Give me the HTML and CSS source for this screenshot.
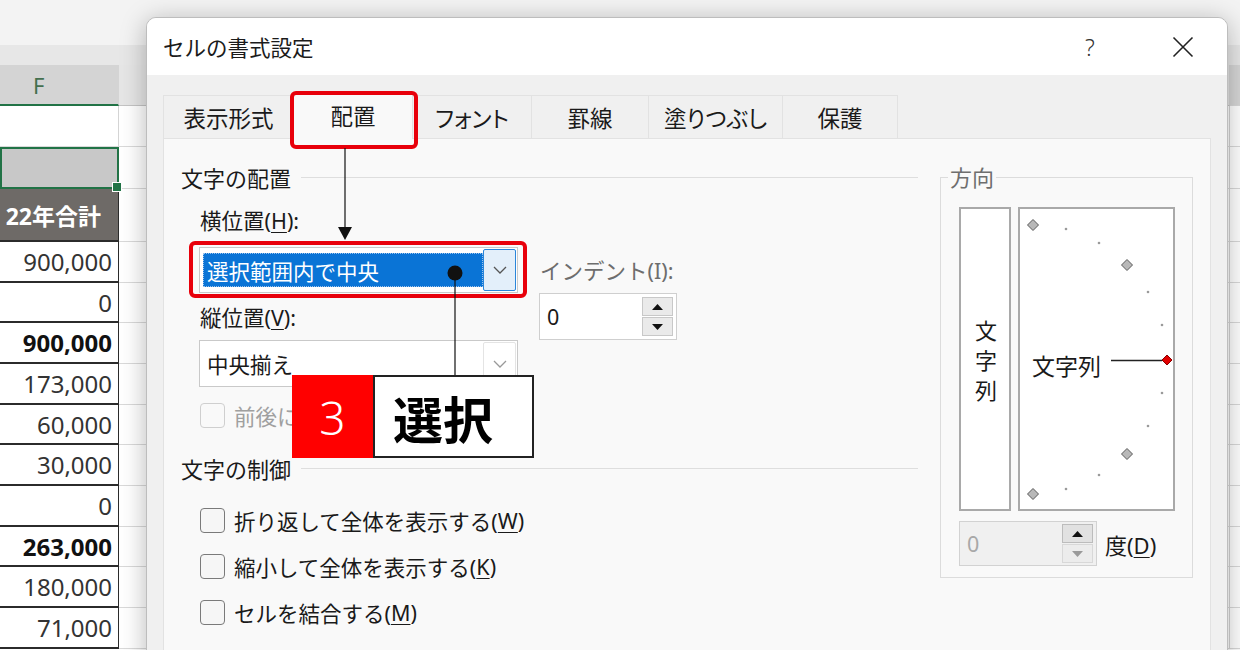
FILE: index.html
```html
<!DOCTYPE html>
<html lang="ja">
<head>
<meta charset="utf-8">
<title>セルの書式設定</title>
<link rel="stylesheet" href="styles.css">
</head>
<body>
<div class="sheet">
  <div class="ribbon"></div>
  <div class="bar"></div>
  <div class="row r-head"><div class="cf">F</div><div class="cg"></div><div class="ch"></div></div>
  <div class="row"><div class="cf"></div><div class="cg"></div><div class="ch"></div></div>
  <div class="row h42"><div class="cf sel"></div><div class="cg"></div><div class="ch"></div></div>
  <div class="row h53"><div class="cf dark">22年合計</div><div class="cg"></div><div class="ch"></div></div>
  <div class="row"><div class="cf t">900,000</div><div class="cg"></div><div class="ch"></div></div>
  <div class="row h40"><div class="cf t">0</div><div class="cg"></div><div class="ch"></div></div>
  <div class="row"><div class="cf t b">900,000</div><div class="cg"></div><div class="ch"></div></div>
  <div class="row"><div class="cf t">173,000</div><div class="cg"></div><div class="ch"></div></div>
  <div class="row h40"><div class="cf t">60,000</div><div class="cg"></div><div class="ch"></div></div>
  <div class="row"><div class="cf t">30,000</div><div class="cg"></div><div class="ch"></div></div>
  <div class="row"><div class="cf t">0</div><div class="cg"></div><div class="ch"></div></div>
  <div class="row h40"><div class="cf t b">263,000</div><div class="cg"></div><div class="ch"></div></div>
  <div class="row"><div class="cf t">180,000</div><div class="cg"></div><div class="ch"></div></div>
  <div class="row"><div class="cf t">71,000</div><div class="cg"></div><div class="ch"></div></div>
</div>

<div class="dialog">
  <div class="titlebar">
    <div class="title">セルの書式設定</div>
    <div class="tb-btn help">?</div>
    <div class="tb-btn close">
      <svg width="22" height="22" viewBox="0 0 22 22"><path d="M1.5 1.5L20.5 20.5M20.5 1.5L1.5 20.5" stroke="#222" stroke-width="1.6" fill="none"/></svg>
    </div>
  </div>
  <div class="dbody">
    <div class="tabs">
      <div class="tab w1">表示形式</div>
      <div class="tab w2 on">配置</div>
      <div class="tab w3">フォント</div>
      <div class="tab w4">罫線</div>
      <div class="tab w5">塗りつぶし</div>
      <div class="tab w6">保護</div>
    </div>
    <div class="panel">
      <div class="left">
        <div class="legend">文字の配置</div>
        <div class="halign">
          <div class="col1">
            <div class="lbl h">横位置(<u>H</u>):</div>
            <div class="combo hc">
              <div class="sel">選択範囲内で中央</div>
              <div class="dd on">
                <svg width="14" height="8" viewBox="0 0 14 8"><path d="M1 1l6 6 6-6" fill="none" stroke="#555" stroke-width="1.3"/></svg>
              </div>
            </div>
            <div class="lbl v">縦位置(<u>V</u>):</div>
            <div class="combo vc">
              <div class="val">中央揃え</div>
              <div class="dd">
                <svg width="14" height="8" viewBox="0 0 14 8"><path d="M1 1l6 6 6-6" fill="none" stroke="#999" stroke-width="1.3"/></svg>
              </div>
            </div>
          </div>
          <div class="col2">
            <div class="lbl gray">インデント(I):</div>
            <div class="spin ind">
              <div class="sval">0</div>
              <div class="btns">
                <div class="sbtn"><svg width="11" height="6" viewBox="0 0 11 6"><path d="M0 6L5.5 0L11 6Z" fill="#111"/></svg></div>
                <div class="sbtn"><svg width="11" height="6" viewBox="0 0 11 6"><path d="M0 0L5.5 6L11 0Z" fill="#111"/></svg></div>
              </div>
            </div>
          </div>
        </div>
        <div class="chk-row dis first"><span class="box"></span>前後にスペースを入れる(E)</div>
        <div class="legend second">文字の制御</div>
        <div class="checks">
          <div class="chk-row"><span class="box"></span>折り返して全体を表示する(<u>W</u>)</div>
          <div class="chk-row"><span class="box"></span>縮小して全体を表示する(<u>K</u>)</div>
          <div class="chk-row"><span class="box"></span>セルを結合する(<u>M</u>)</div>
        </div>
      </div>
      <div class="group">
        <div class="gtitle"><span>方向</span></div>
        <div class="boxes">
          <div class="vbox"><span class="vtext">文字列</span></div>
          <div class="dial">
            <svg class="dial-art" width="153" height="300" viewBox="0 0 153 300">
              <g fill="#9a9a9a">
                <circle cx="46" cy="20" r="1.3"/>
                <circle cx="79" cy="34" r="1.3"/>
                <circle cx="128" cy="83" r="1.3"/>
                <circle cx="142" cy="116" r="1.3"/>
                <circle cx="142" cy="184" r="1.3"/>
                <circle cx="128" cy="217" r="1.3"/>
                <circle cx="79" cy="266" r="1.3"/>
                <circle cx="46" cy="280" r="1.3"/>
              </g>
              <g fill="#b8b8b8" stroke="#5a5a5a" stroke-width="1">
                <path d="M13 10.5L18.5 16L13 21.5L7.5 16Z"/>
                <path d="M107 50.5L112.5 56L107 61.5L101.5 56Z"/>
                <path d="M107 239.5L112.5 245L107 250.5L101.5 245Z"/>
                <path d="M13 279.5L18.5 285L13 290.5L7.5 285Z"/>
              </g>
              <path d="M91 151.5H142" stroke="#222" stroke-width="1.4"/>
              <path d="M147 146L152 151L147 156L142 151Z" fill="#e00000" stroke="#8a0000" stroke-width="1"/>
            </svg>
            <span class="dtext">文字列</span>
          </div>
        </div>
        <div class="deg-row">
          <div class="spin deg">
            <div class="sval">0</div>
            <div class="btns">
              <div class="sbtn up"><svg width="11" height="6" viewBox="0 0 11 6"><path d="M0 6L5.5 0L11 6Z" fill="#111"/></svg></div>
              <div class="sbtn dn"><svg width="11" height="6" viewBox="0 0 11 6"><path d="M0 0L5.5 6L11 0Z" fill="#9a9a9a"/></svg></div>
            </div>
          </div>
          <div class="deg-lbl">度(<u>D</u>)</div>
        </div>
      </div>
    </div>
  </div>
</div>

<div class="mark mtab"></div>
<div class="mark mcombo"></div>
<svg class="arrow" width="14" height="93" viewBox="0 0 14 93"><path d="M7 0V80" stroke="#111" stroke-width="1.2"/><path d="M0 79H14L7 92Z" fill="#111"/></svg>
<svg class="pin" width="16" height="112" viewBox="0 0 16 112"><path d="M8 8V112" stroke="#111" stroke-width="1.2"/><circle cx="8" cy="8" r="7.5" fill="#111"/></svg>
<div class="callout"><div class="num">3</div><div class="txt">選択</div></div>
</body>
</html>
```
FILE: styles.css
```css
* { box-sizing: border-box; margin: 0; padding: 0; }
html, body { width: 1240px; height: 650px; overflow: hidden; }
body {
  position: relative;
  background: #fff;
  font-family: "Noto Sans", "Noto Sans CJK JP", sans-serif;
  color: #1a1a1a;
}
u { text-decoration: underline; text-underline-offset: 3px; text-decoration-thickness: 1px; }

/* spreadsheet behind the dialog */
.sheet { width: 1240px; }
.ribbon { height: 45px; background: #f3f3f3; }
.bar { height: 20px; background: #e7e7e7; }
.row { display: flex; height: 41px; }
.row.h40 { height: 40px; }
.row.h42 { height: 42px; }
.row.h53 { height: 53px; }
.cf {
  width: 119px; flex: none;
  border-right: 1px solid #d4d4d4; border-bottom: 1px solid #d9d9d9;
  display: flex; align-items: center; justify-content: flex-end;
  padding-right: 6px; font-size: 24px; color: #333; white-space: nowrap;
}
.cg { flex: 1; border-right: 1px solid #d4d4d4; border-bottom: 1px solid #d9d9d9; }
.ch { width: 10px; flex: none; border-bottom: 1px solid #d9d9d9; }
.r-head .cf {
  background: #d4d4d4; border-bottom: 2px solid #217346;
  justify-content: flex-start; padding-left: 33px; font-size: 22px; color: #44704f;
}
.r-head .cg { background: #e6e6e6; border-bottom-color: #c4c4c4; }
.r-head .ch { background: #d6d6d6; }
.cf.sel { background: #c8c8c8; border: 2px solid #217346; position: relative; }
.cf.sel::after {
  content: ""; position: absolute; right: -5px; bottom: -5px;
  width: 8px; height: 8px; background: #217346; border: 1px solid #fff;
}
.cf.dark {
  background: #6e6a67; color: #fff; font-weight: 700; font-size: 23px;
  padding-right: 17px; border-bottom: 2px solid #2b2b2b; border-right: 1px solid #2b2b2b;
}
.cf.t { border-bottom: 2px solid #2b2b2b; border-right: 1px solid #2b2b2b; }
.cf.b { font-weight: 700; color: #111; }

/* dialog window */
.dialog {
  position: absolute; left: 146px; top: 17px; width: 1082px; height: 680px;
  background: #f0f0f0; border: 1px solid #bdbdbd; border-radius: 10px 10px 0 0;
  box-shadow: 0 4px 26px rgba(0, 0, 0, 0.28);
  overflow: hidden; display: flex; flex-direction: column;
}
.titlebar {
  height: 57px; flex: none; background: #fff;
  display: flex; align-items: center; padding: 0 21px 0 16px;
}
.title { flex: 1; font-size: 21.5px; color: #1b1b1b; }
.tb-btn { width: 46px; height: 40px; display: flex; align-items: center; justify-content: center; }
.help { font-size: 23px; color: #333; margin-right: 47px; font-weight: 300; }

.dbody { flex: 1; padding: 17px 16px 0; display: flex; flex-direction: column; }
.tabs { display: flex; align-items: flex-end; height: 46px; flex: none; font-feature-settings: "palt"; }
.tab {
  height: 43px; display: flex; align-items: center; justify-content: center;
  font-size: 22.5px; background: #f0f0f0; color: #1a1a1a;
  border: 1px solid #e2e2e2; border-bottom: none; margin-right: -1px;
}
.tab.on { height: 47px; background: #f9f9f9; margin-bottom: -1px; position: relative; z-index: 1; padding-bottom: 2px; }
.w1 { width: 131px; }
.w2 { width: 120px; }
.w3 { width: 120px; }
.w4 { width: 118px; }
.w5 { width: 135px; }
.w6 { width: 116px; }

.panel {
  flex: 1; background: #f9f9f9; border: 1px solid #e2e2e2;
  padding: 24px 17px 0 17px;
  display: grid; grid-template-columns: 737px 253px; column-gap: 22px; align-items: start;
}

.legend { display: flex; align-items: center; height: 28px; font-size: 22px; color: #1a1a1a; }
.legend::after { content: ""; flex: 1; height: 1px; background: #dedede; margin-left: 10px; }
.legend.second { margin-top: 24px; }

.halign { display: flex; align-items: flex-start; padding-left: 18px; }
.col1 { width: 319px; }
.col2 { width: 138px; margin-left: 21px; padding-top: 65px; }
.lbl { height: 30px; line-height: 30px; font-size: 21.5px; padding-left: 1px; white-space: nowrap; }
.lbl.h { margin-top: 15px; }
.lbl.v { margin-top: 10px; }
.lbl.gray { color: #6d6d6d; }

.combo {
  display: flex; align-items: stretch; background: #fff;
  border: 1px solid #c9c9c9; padding: 1px 1px 1px 3px;
}
.combo.hc { margin-top: 11px; height: 46px; }
.combo.vc { margin-top: 7px; height: 47px; }
.combo .sel {
  flex: 1; margin: 4px 0 4px 0; background: #0a74d6; color: #fff;
  outline: 1px dotted #9cc3ec; outline-offset: -1px;
  display: flex; align-items: center; padding-left: 4px; font-size: 21.5px; white-space: nowrap;
}
.combo .val { flex: 1; display: flex; align-items: center; padding-left: 4px; font-size: 21.5px; }
.dd {
  width: 33px; flex: none; display: flex; align-items: center; justify-content: center;
  border: 1px solid #e4e4e4; background: #fff; border-radius: 2px;
}
.dd.on { background: #e3effa; border-color: #2a86da; }

.spin {
  display: flex; align-items: stretch; border: 1px solid #cfcfcf; background: #fff;
  padding: 3px 3px 3px 7px;
}
.spin.ind { margin-top: 7px; height: 47px; }
.sval { flex: 1; display: flex; align-items: center; font-size: 21.5px; }
.btns { width: 31px; display: flex; flex-direction: column; gap: 1px; }
.sbtn {
  flex: 1; display: flex; align-items: center; justify-content: center;
  background: #eaeaea; border: 1px solid #c8c8c8;
}

.chk-row { display: flex; align-items: center; height: 46px; padding-left: 19px; font-size: 21.5px; white-space: nowrap; }
.chk-row.first { height: 30px; margin-top: 13px; }
.chk-row.dis { color: #a0a0a0; }
.checks { margin-top: 15px; }
.box {
  width: 25px; height: 25px; flex: none; margin-right: 9px;
  border: 1.5px solid #7a7a7a; border-radius: 4px; background: #f6f6f6;
}
.chk-row.dis .box { border-color: #cfcfcf; background: #f9f9f9; }

/* orientation group */
.group { border: 1px solid #dcdcdc; margin-top: 14px; padding: 0 17px 11px 18px; }
.gtitle { height: 28px; margin-top: -15px; display: flex; align-items: center; }
.gtitle span { background: #f9f9f9; padding: 0 2px; margin-left: -11px; font-size: 22px; color: #6e6e6e; line-height: 28px; }
.boxes { display: flex; gap: 7px; margin-top: 16px; height: 304px; }
.vbox {
  width: 52px; background: #fff; border: 2px solid #a9a9a9;
  display: flex; align-items: center; justify-content: center;
}
.vtext { writing-mode: vertical-rl; text-orientation: upright; font-size: 22px; letter-spacing: 8px; margin-bottom: -12px; color: #1a1a1a; }
.dial { width: 157px; background: #fff; border: 2px solid #a9a9a9; position: relative; }
.dial-art { display: block; }
.dtext { position: absolute; left: 12px; top: 142px; font-size: 23px; line-height: 30px; color: #1a1a1a; }

.deg-row { display: flex; align-items: center; margin-top: 10px; }
.spin.deg { width: 138px; height: 45px; background: #f0f0f0; border-color: #d2d2d2; padding: 2px 3px 2px 7px; }
.spin.deg .sval { color: #a8a8a8; }
.sbtn.up { background: #e1e1e1; border-color: #bcbcbc; }
.sbtn.dn { background: #ececec; border-color: #d8d8d8; }
.deg-lbl { margin-left: 8px; font-size: 22px; }

/* annotations */
.mark { position: absolute; border: 4px solid #e8000b; border-radius: 6px; z-index: 5; }
.mtab { left: 290px; top: 91px; width: 128px; height: 58px; }
.mcombo { left: 189px; top: 241px; width: 338px; height: 57px; }
.arrow { position: absolute; left: 338px; top: 148px; z-index: 5; }
.pin { position: absolute; left: 447px; top: 265px; z-index: 5; }
.callout { position: absolute; left: 292px; top: 375px; height: 83px; display: flex; z-index: 6; }
.callout .num {
  width: 81px; background: #ff0000; color: #fff; font-size: 46px; font-weight: 300;
  display: flex; align-items: center; justify-content: center; font-family: "Noto Sans", sans-serif;
}
.callout .txt {
  width: 161px; background: #fff; border: 2px solid #222; color: #000;
  font-family: "Noto Sans CJK JP", sans-serif; font-size: 50px; font-weight: 700;
  display: flex; align-items: center; padding-left: 18px;
}
```
